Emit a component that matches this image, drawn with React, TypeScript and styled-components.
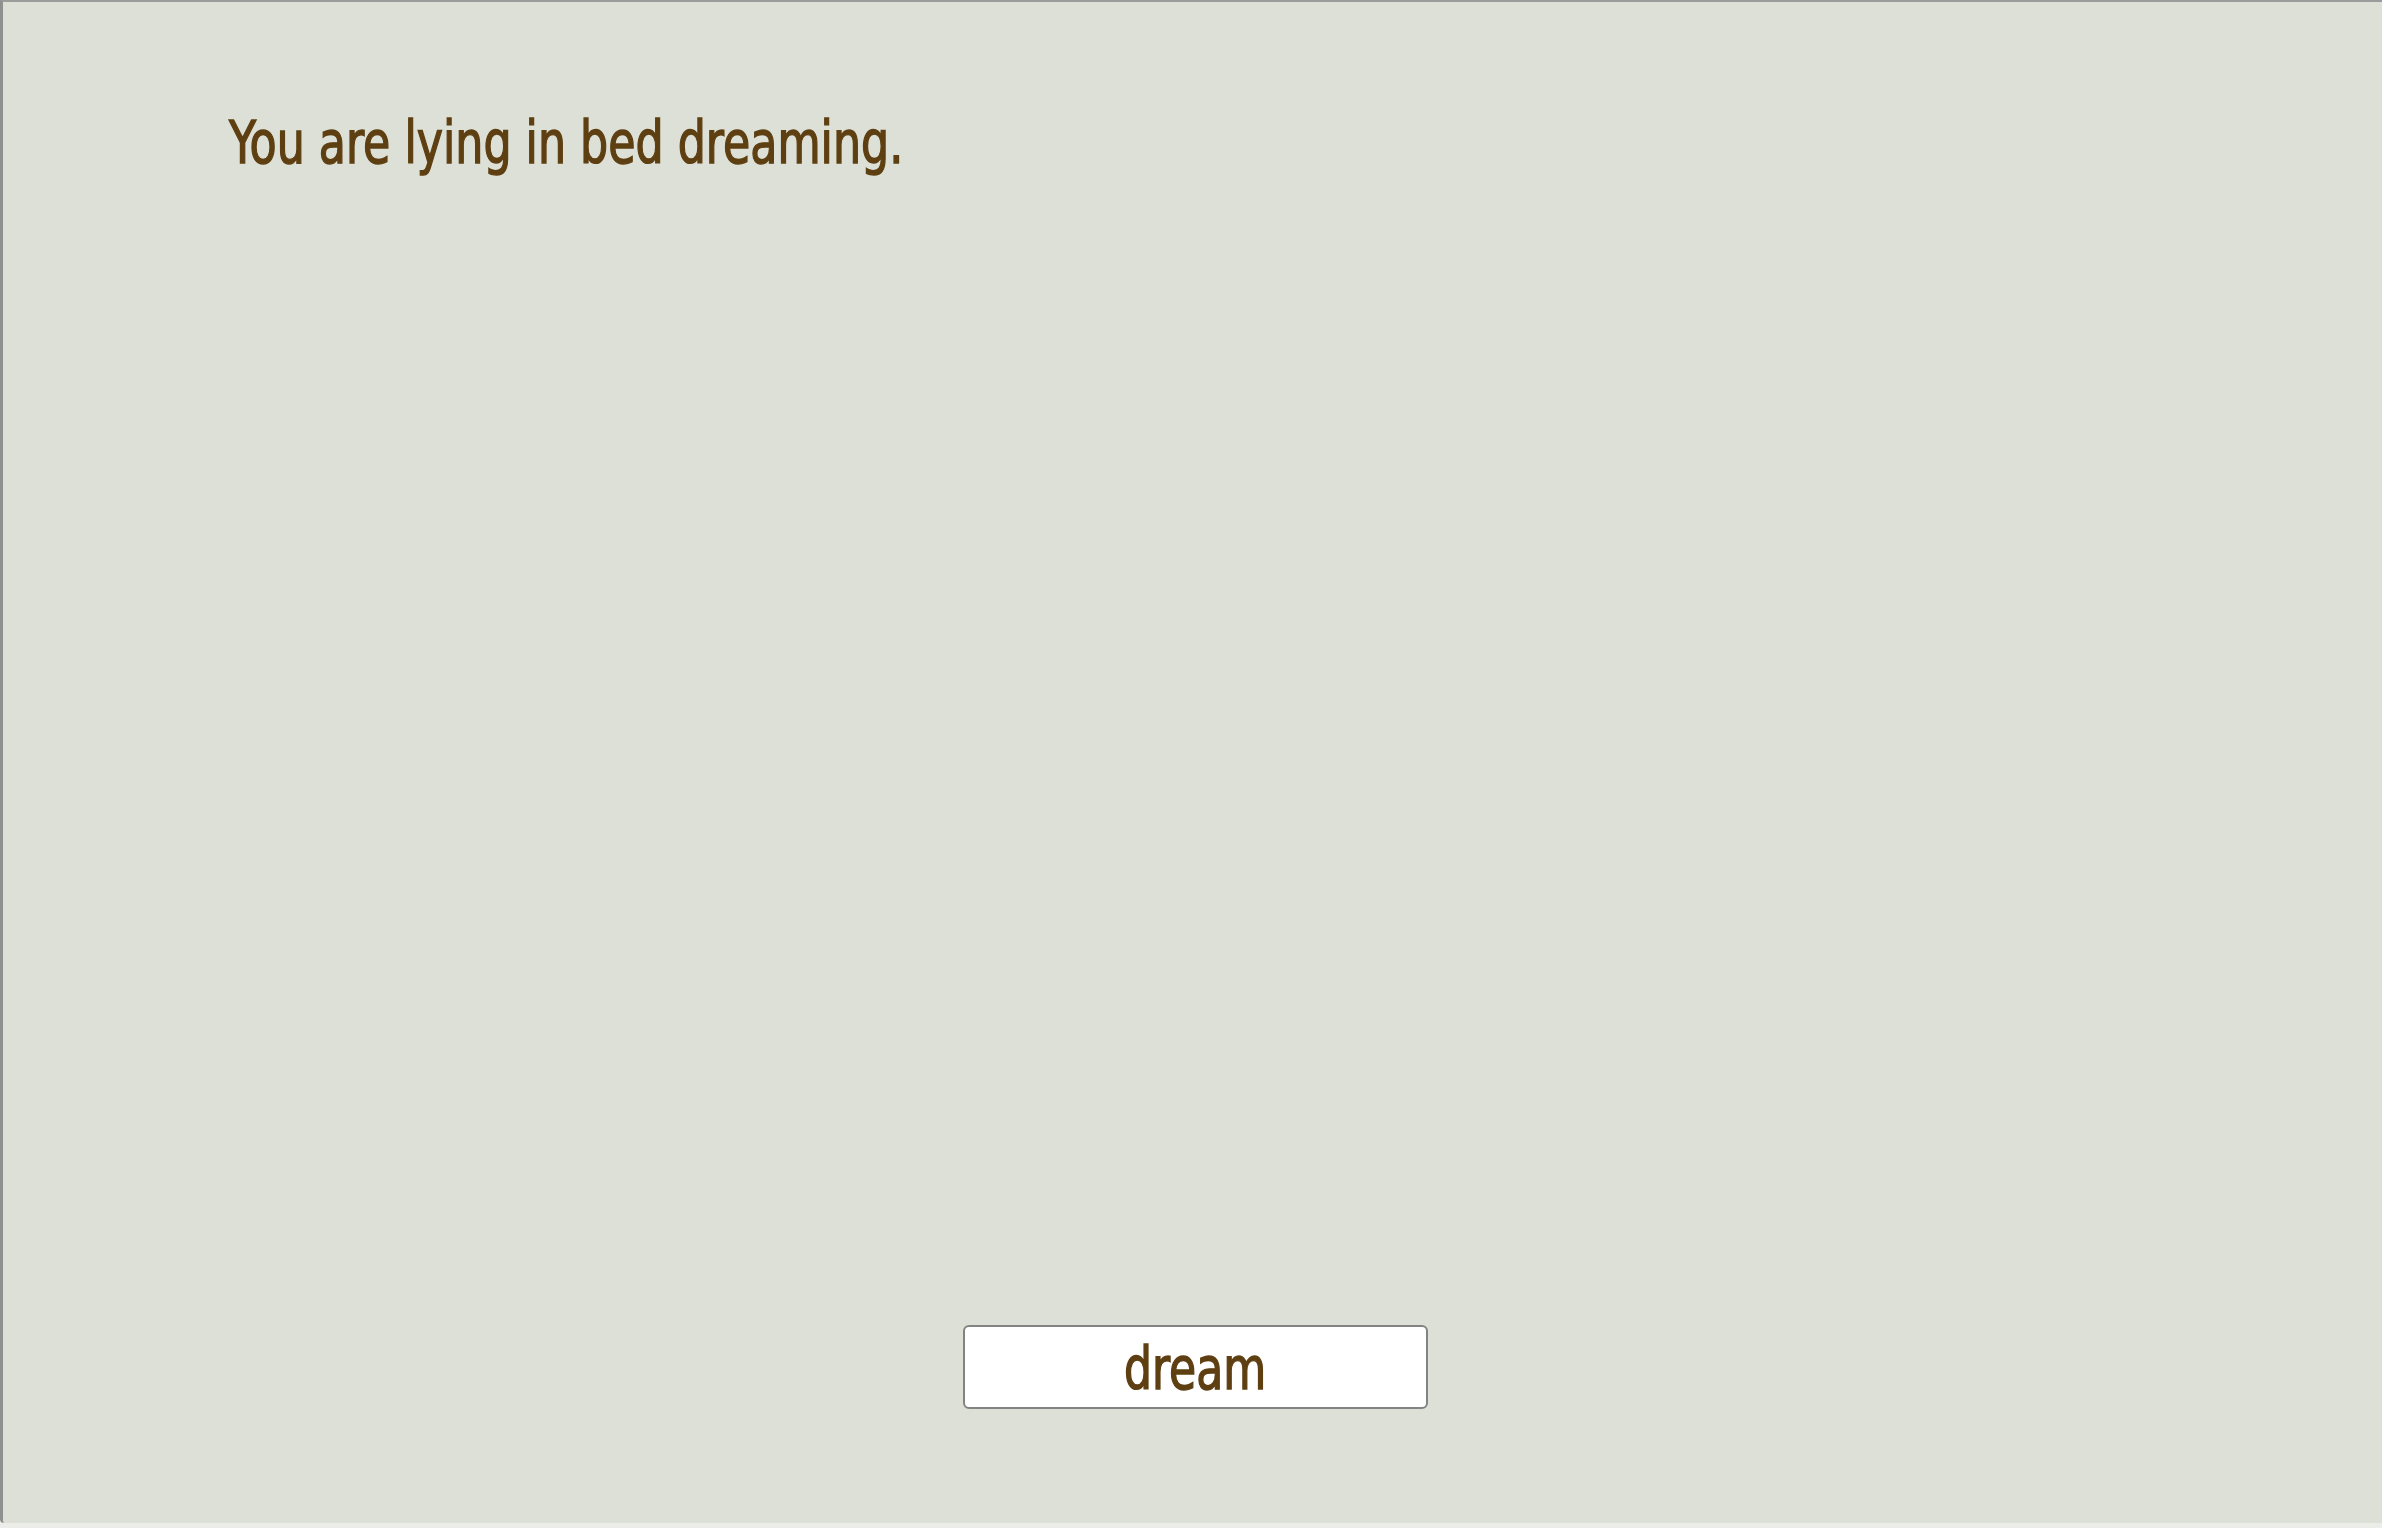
import React from "react";
import styled, { createGlobalStyle } from "styled-components";

const Global = createGlobalStyle`
  html, body { margin: 0; padding: 0; background: #ecede9; }
  body { width: 2382px; height: 1528px; overflow: hidden; }
`;

const Screen = styled.div`
  box-sizing: border-box;
  width: 2382px;
  height: 1523px;
  background: #dde0d6;
  border-top: 2px solid #9b9b9b;
  border-left: 3px solid #8f8f8f;
  border-bottom-left-radius: 4px;
  display: flex;
  flex-direction: column;
  font-family: "Liberation Sans Narrow", "DejaVu Sans Condensed", "Liberation Sans", sans-serif;
  color: #5e3f12;
`;

const Story = styled.p`
  margin: 0;
  padding: 101px 0 0 226px;
  font-size: 59px;
  line-height: 80px;
`;

const Narrow = styled.span`
  display: inline-block;
  transform: scaleX(0.835);
  transform-origin: left center;
  white-space: nowrap;
  -webkit-text-stroke: 1.4px #5e3f12;
`;

const Footer = styled.div`
  margin-top: auto;
  display: flex;
  justify-content: center;
  padding: 0 0 114px 5px;
`;

const ActionButton = styled.button`
  box-sizing: border-box;
  width: 465px;
  height: 84px;
  background: #ffffff;
  border: 2px solid #838383;
  border-radius: 6px;
  font-family: inherit;
  font-size: 58px;
  line-height: 1;
  color: #5e3f12;
  cursor: pointer;
  padding: 0;
  display: flex;
  align-items: center;
  justify-content: center;
`;

const ButtonLabel = styled(Narrow)`
  transform: scaleX(0.845);
  transform-origin: center center;
  margin-top: 4px;
`;

export default function App() {
  return (
    <>
      <Global />
      <Screen>
        <Story>
          <Narrow>You are lying in bed dreaming.</Narrow>
        </Story>
        <Footer>
          <ActionButton>
            <ButtonLabel>dream</ButtonLabel>
          </ActionButton>
        </Footer>
      </Screen>
    </>
  );
}
